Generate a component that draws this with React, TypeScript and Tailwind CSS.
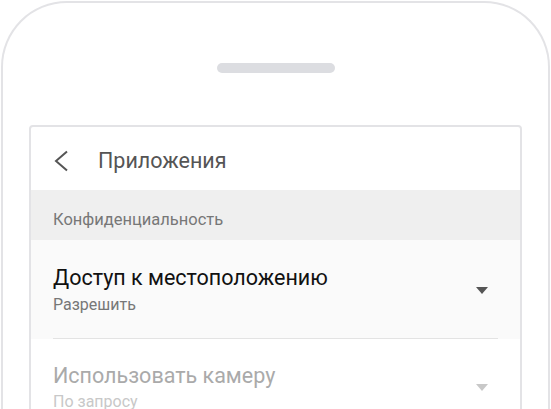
import React from 'react';

const Caret = ({ color }: { color: string }) => (
  <svg width="12" height="7" viewBox="0 0 12 7" className="shrink-0">
    <path d="M0 0 L12 0 L6 7 Z" fill={color} />
  </svg>
);

export default function App() {
  return (
    <main className="w-[551px] h-[409px] overflow-hidden bg-white font-['Roboto',sans-serif]">
      <div className="ml-px mt-px w-[549px] h-[460px] border-2 border-b-0 border-[#e3e3e6] rounded-t-[66px] flex flex-col items-center pt-[60px] px-[26px]">
        <div className="w-[118px] h-[10px] rounded-full bg-[#dcdde1]" />
        <section className="mt-[52px] w-full border-2 border-[#e3e3e6] rounded-[4px] bg-white flex flex-col">
          <header className="h-[63px] flex items-center pl-[22px] pt-[5px]">
            <svg width="16" height="22" viewBox="0 0 16 22" className="mr-[29px]">
              <path d="M14 1.5 L3 11 L14 20.5" fill="none" stroke="#555" strokeWidth="2" />
            </svg>
            <span className="text-[21.5px] text-[#555]">Приложения</span>
          </header>
          <div className="h-[50px] bg-[#efefef] flex items-center pl-[22px] pt-[11px] text-[16.5px] text-[#777]">
            Конфиденциальность
          </div>
          <article className="bg-[#fafafa] px-[22px]">
            <div className="flex items-center justify-between pt-[25px] pb-[23px] border-b border-[#e3e3e3] pr-[10px]">
              <div className="flex flex-col">
                <span className="text-[21.5px] leading-[26px] text-[#111]">Доступ к местоположению</span>
                <span className="text-[16px] leading-[20px] mt-[4px] text-[#777]">Разрешить</span>
              </div>
              <Caret color="#555" />
            </div>
          </article>
          <article className="bg-white px-[22px]">
            <div className="flex items-center justify-between pt-[24px] pb-[26px] pr-[10px]">
              <div className="flex flex-col">
                <span className="text-[21.5px] leading-[26px] text-[#aaa]">Использовать камеру</span>
                <span className="text-[16px] leading-[20px] mt-[3px] text-[#c8c8c8]">По запросу</span>
              </div>
              <Caret color="#c8c8c8" />
            </div>
          </article>
        </section>
      </div>
    </main>
  );
}
